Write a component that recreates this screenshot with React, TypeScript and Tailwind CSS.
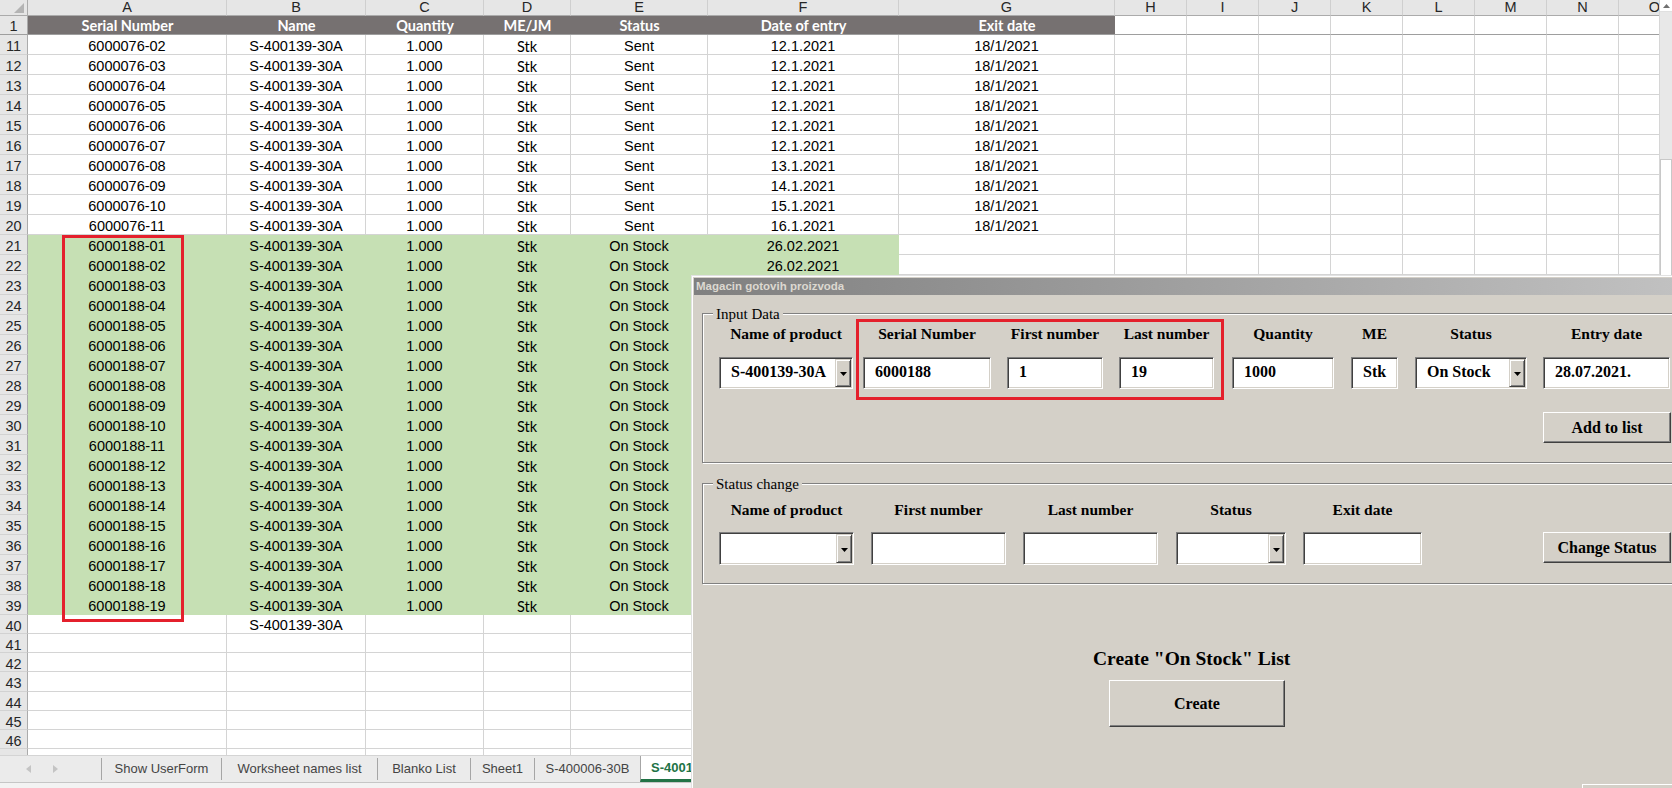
import React from 'react';

type Col = { l: string; w: string };

const COLS: Col[] = [
  { l: 'A', w: 'w-[199px]' },
  { l: 'B', w: 'w-[139px]' },
  { l: 'C', w: 'w-[118px]' },
  { l: 'D', w: 'w-[87px]' },
  { l: 'E', w: 'w-[137px]' },
  { l: 'F', w: 'w-[191px]' },
  { l: 'G', w: 'w-[216px]' },
  { l: 'H', w: 'w-[72px]' },
  { l: 'I', w: 'w-[72px]' },
  { l: 'J', w: 'w-[72px]' },
  { l: 'K', w: 'w-[72px]' },
  { l: 'L', w: 'w-[72px]' },
  { l: 'M', w: 'w-[72px]' },
  { l: 'N', w: 'w-[72px]' },
  { l: 'O', w: 'w-[72px]' },
];

const HEAD = ['Serial Number', 'Name', 'Quantity', 'ME/JM', 'Status', 'Date of entry', 'Exit date'];

function values(n: number): string[] {
  if (n >= 11 && n <= 20) {
    const s = String(n - 9).padStart(2, '0');
    const entry = n <= 16 ? '12.1.2021' : `${n - 4}.1.2021`;
    return [`6000076-${s}`, 'S-400139-30A', '1.000', 'Stk', 'Sent', entry, '18/1/2021'];
  }
  if (n >= 21 && n <= 39) {
    const s = String(n - 20).padStart(2, '0');
    // column F is hidden under the dialog from row 23 down
    return [`6000188-${s}`, 'S-400139-30A', '1.000', 'Stk', 'On Stock', n <= 22 ? '26.02.2021' : '', ''];
  }
  if (n === 40) return ['', 'S-400139-30A'];
  return [];
}

const ROWS = Array.from({ length: 37 }, (_, i) => 11 + i);

function Sheet() {
  return (
    <div className="w-[1659px] overflow-hidden flex flex-col shrink-0">
      {/* column letters */}
      <div className="flex h-[16px] shrink-0">
        <div className="w-[28px] shrink-0 bg-[#e6e6e6] border-r border-b border-[#ababab] flex items-end justify-end pr-[3px] pb-[2px]">
          <svg width="10" height="10" viewBox="0 0 10 10">
            <path d="M10 0V10H0Z" fill="#b4b4b4" />
          </svg>
        </div>
        {COLS.map((c) => (
          <div
            key={c.l}
            className={`${c.w} shrink-0 bg-[#e6e6e6] border-r border-r-[#cfcfcf] border-b border-b-[#ababab] text-[14.5px] leading-[15px] text-center text-[#262626]`}
          >
            {c.l}
          </div>
        ))}
      </div>
      {/* row 1 */}
      <div className="flex h-[19px] shrink-0">
        <div className="w-[28px] shrink-0 bg-[#e6e6e6] border-r border-r-[#ababab] border-b border-b-[#9e9e9e] text-[14.5px] leading-[20px] text-center text-[#262626]">
          1
        </div>
        {COLS.map((c, i) =>
          i < 7 ? (
            <div
              key={c.l}
              className={`${c.w} shrink-0 bg-[#767171] border-b border-b-[#9e9e9e] flex items-center justify-center pt-[2px] text-white font-bold text-[14.5px] font-['Lato',sans-serif]`}
            >
              {HEAD[i]}
            </div>
          ) : (
            <div key={c.l} className={`${c.w} shrink-0 bg-white border-r border-r-[#d4d4d4] border-b border-b-[#9e9e9e]`} />
          )
        )}
      </div>
      {ROWS.map((n) => {
        const v = values(n);
        const green = n >= 21 && n <= 39;
        const h = n <= 39 ? 'h-[20px]' : 'h-[19.14px]';
        return (
          <div key={n} className={`flex ${h} shrink-0`}>
            <div className="w-[28px] shrink-0 bg-[#e6e6e6] border-r border-r-[#ababab] border-b border-b-[#d2d2d2] text-[14.5px] leading-[22px] text-center text-[#262626]">
              {n}
            </div>
            {COLS.map((c, i) => {
              const g = green && i < 6;
              const font = i === 3 ? "font-['Lato',sans-serif]" : '';
              return (
                <div
                  key={c.l}
                  className={`${c.w} shrink-0 flex items-center justify-center pt-[4px] text-[14.5px] text-black ${font} ${
                    g
                      ? 'bg-[#c6e0b4] border-r border-b border-[#c6e0b4]'
                      : 'bg-white border-r border-b border-[#d4d4d4]'
                  }`}
                >
                  {v[i] ?? ''}
                </div>
              );
            })}
          </div>
        );
      })}
    </div>
  );
}

function Scrollbar() {
  return (
    <div className="w-[13px] shrink-0 flex flex-col bg-[#e8e8e8] border-l border-[#d6d6d6]">
      <div className="h-[12px] bg-white border-b border-[#e0e0e0] flex items-center justify-center">
        <svg width="7" height="4" viewBox="0 0 7 4">
          <path d="M0 4L3.5 0L7 4Z" fill="#707070" />
        </svg>
      </div>
      <div className="h-[147px]" />
      <div className="h-[400px] bg-white border border-[#c8c8c8]" />
    </div>
  );
}

function TabBar() {
  const tabs: { t: string; w: string }[] = [
    { t: 'Show UserForm', w: 'w-[120px]' },
    { t: 'Worksheet names list', w: 'w-[156px]' },
    { t: 'Blanko List', w: 'w-[93px]' },
    { t: 'Sheet1', w: 'w-[64px]' },
    { t: 'S-400006-30B', w: 'w-[106px]' },
  ];
  return (
    <div className="h-[28px] bg-[#ebebeb] border-t border-[#d4d4d4] border-b border-b-[#c6c6c6] flex text-[13px] text-[#444]">
      <div className="w-[101px] shrink-0 flex items-center pl-[26px] gap-[22px]">
        <svg width="5" height="8" viewBox="0 0 5 8">
          <path d="M5 0V8L0 4Z" fill="#c4c4c4" />
        </svg>
        <svg width="5" height="8" viewBox="0 0 5 8">
          <path d="M0 0V8L5 4Z" fill="#c4c4c4" />
        </svg>
      </div>
      {tabs.map((t) => (
        <div key={t.t} className={`${t.w} shrink-0 border-l border-[#a6a6a6] my-[2px] flex items-center justify-center whitespace-nowrap`}>
          {t.t}
        </div>
      ))}
      <div className="w-[150px] shrink-0 border-l border-[#a6a6a6] bg-white border-b-[3px] border-b-[#217346] flex items-center pl-[10px] font-bold text-[#217346] whitespace-nowrap">
        S-400139-30A
      </div>
    </div>
  );
}

const serif = "font-['Liberation_Serif','Times_New_Roman',serif]";

function Arrow() {
  return (
    <svg width="7" height="4" viewBox="0 0 7 4">
      <path d="M0 0H7L3.5 4Z" fill="#000" />
    </svg>
  );
}

function Box({ w, h, value, combo, pl = 'pl-[10px]' }: { w: string; h: string; value?: string; combo?: boolean; pl?: string }) {
  return (
    <div
      className={`${w} ${h} bg-white border border-t-[#808080] border-l-[#808080] border-b-white border-r-white shadow-[inset_1px_1px_0_#404040,inset_-1px_-1px_0_#d4d0c8] p-[1px] flex items-stretch`}
    >
      <div className={`flex-1 flex items-center ${pl} pb-[3px] font-bold text-[16px] text-black whitespace-nowrap overflow-hidden`}>{value}</div>
      {combo && (
        <div className="w-[16px] bg-[#d4d0c8] border border-t-[#d4d0c8] border-l-[#d4d0c8] border-b-[#404040] border-r-[#404040] shadow-[inset_1px_1px_0_#ffffff,inset_-1px_-1px_0_#808080] flex items-center justify-center pt-[2px]">
          <Arrow />
        </div>
      )}
    </div>
  );
}

function Btn({ w, h, label, extra = '' }: { w: string; h: string; label?: string; extra?: string }) {
  return (
    <div
      className={`${w} ${h} ${extra} shrink-0 bg-[#d4d0c8] border border-t-white border-l-white border-b-[#404040] border-r-[#404040] shadow-[inset_-1px_-1px_0_#808080] flex items-center justify-center font-bold text-[16px] text-black`}
    >
      {label}
    </div>
  );
}

function Field({
  w,
  h,
  label,
  value,
  combo,
  ml,
  gap,
  pl,
}: {
  w: string;
  h: string;
  label: string;
  value?: string;
  combo?: boolean;
  ml: string;
  gap: string;
  pl?: string;
}) {
  return (
    <div className={`${w} ${ml} shrink-0 flex flex-col items-center`}>
      <div className="h-[18px] leading-[18px] font-bold text-[15.5px] text-black whitespace-nowrap">{label}</div>
      <div className={gap}>
        <Box w={w} h={h} value={value} combo={combo} pl={pl} />
      </div>
    </div>
  );
}

function Frame({ legend, h, children }: { legend: string; h: string; children: React.ReactNode }) {
  return (
    <div className={`relative w-[1000px] ${h} border border-[#808080] shadow-[inset_1px_1px_0_#ffffff,1px_1px_0_#ffffff]`}>
      <div className="absolute left-[10px] -top-[9px] px-[3px] bg-[#d4d0c8] text-[15px] leading-[18px] text-black">{legend}</div>
      {children}
    </div>
  );
}

function Dialog() {
  return (
    <div
      className={`absolute left-[691px] top-[275px] w-[1000px] h-[520px] bg-[#d4d0c8] pt-[3px] pl-[3px] shadow-[inset_1px_1px_0_#e2e2e2,inset_2px_2px_0_#ffffff] ${serif}`}
    >
      <div className="h-[17px] bg-linear-to-r from-[#808080] to-[#c2c2c2] flex items-center pl-[2px] text-[11.5px] font-bold text-[#dcd8d0] font-['Liberation_Sans',Arial,sans-serif]">
        Magacin gotovih proizvoda
      </div>
      <div className="pl-[8px] pt-[18px]">
        <Frame legend="Input Data" h="h-[150px]">
          <div className="pt-[11px] pl-[16px] flex">
            <Field w="w-[134px]" h="h-[32px]" ml="ml-0" gap="mt-[14px]" label="Name of product" value="S-400139-30A" combo />
            <Field w="w-[128px]" h="h-[32px]" ml="ml-[10px]" gap="mt-[14px]" label="Serial Number" value="6000188" />
            <Field w="w-[96px]" h="h-[32px]" ml="ml-[16px]" gap="mt-[14px]" label="First number" value="1" />
            <Field w="w-[95px]" h="h-[32px]" ml="ml-[16px]" gap="mt-[14px]" label="Last number" value="19" />
            <Field w="w-[102px]" h="h-[32px]" ml="ml-[18px]" gap="mt-[14px]" label="Quantity" value="1000" />
            <Field w="w-[47px]" h="h-[32px]" ml="ml-[17px]" gap="mt-[14px]" label="ME" value="Stk" pl="pl-[10px]" />
            <Field w="w-[112px]" h="h-[32px]" ml="ml-[17px]" gap="mt-[14px]" label="Status" value="On Stock" combo />
            <Field w="w-[127px]" h="h-[32px]" ml="ml-[16px]" gap="mt-[14px]" label="Entry date" value="28.07.2021." />
          </div>
          <div className="mt-[23px] flex">
            <Btn w="w-[128px]" h="h-[31px]" label="Add to list" extra="ml-[840px]" />
          </div>
          <div className="absolute left-[153px] top-[5px] w-[368px] h-[81px] border-[3px] border-[#e4202c]" />
        </Frame>
        <div className="mt-[20px]">
          <Frame legend="Status change" h="h-[101px]">
            <div className="pt-[17px] pl-[16px] flex">
              <Field w="w-[135px]" h="h-[33px]" ml="ml-0" gap="mt-[13px]" label="Name of product" combo />
              <Field w="w-[135px]" h="h-[33px]" ml="ml-[17px]" gap="mt-[13px]" label="First number" />
              <Field w="w-[135px]" h="h-[33px]" ml="ml-[17px]" gap="mt-[13px]" label="Last number" />
              <Field w="w-[110px]" h="h-[33px]" ml="ml-[18px]" gap="mt-[13px]" label="Status" combo />
              <Field w="w-[119px]" h="h-[33px]" ml="ml-[17px]" gap="mt-[13px]" label="Exit date" />
              <div className="ml-[121px] flex flex-col">
                <div className="h-[18px]" />
                <div className="mt-[13px]">
                  <Btn w="w-[128px]" h="h-[31px]" label="Change Status" />
                </div>
              </div>
            </div>
          </Frame>
        </div>
        <div className="mt-[64px] ml-[391px] h-[22px] leading-[22px] font-bold text-[19.5px] text-black whitespace-nowrap">
          Create "On Stock" List
        </div>
        <div className="mt-[10px] flex">
          <Btn w="w-[176px]" h="h-[47px]" label="Create" extra="ml-[407px]" />
        </div>
        <div className="mt-[57px] flex">
          <Btn w="w-[128px]" h="h-[31px]" extra="ml-[880px]" />
        </div>
      </div>
    </div>
  );
}

export default function App() {
  return (
    <div className="relative w-[1672px] h-[788px] overflow-hidden bg-white font-['Liberation_Sans',Arial,sans-serif]">
      <div className="flex h-[755px] overflow-hidden">
        <Sheet />
        <Scrollbar />
      </div>
      <TabBar />
      <div className="h-[5px] bg-[#f3f3f3]" />
      <div className="absolute left-[62px] top-[235px] w-[122px] h-[387px] border-[3px] border-[#e4202c]" />
      <Dialog />
    </div>
  );
}
